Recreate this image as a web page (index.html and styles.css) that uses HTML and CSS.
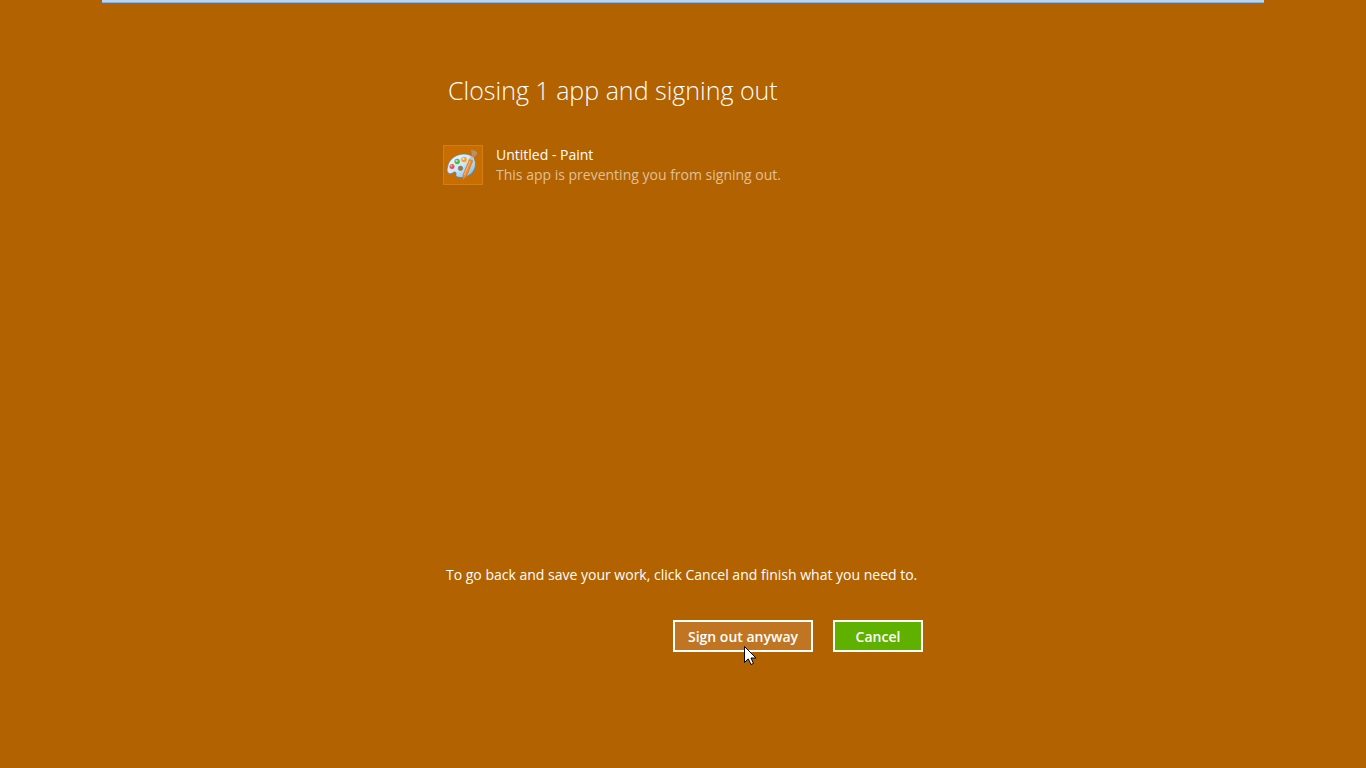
FILE: index.html
```
<!DOCTYPE html>
<html lang="en">
   <head>
      <meta charset="utf-8">
      <title>Closing 1 app and signing out</title>
      <link rel="stylesheet" href="styles.css">
   </head>
   <body>
      <div class="topbar"></div>
      <main class="panel">
         <h1 class="title">Closing 1 app and signing out</h1>
         <ul class="apps">
            <li class="app">
               <span class="tile">
                  <svg width="34" height="34" viewBox="0 0 34 34" aria-hidden="true">
                     <defs>
                        <linearGradient id="palette" x1="0" y1="0" x2="1" y2="1">
                           <stop offset="0" stop-color="#f4fbff"/>
                           <stop offset="0.5" stop-color="#cfe7f5"/>
                           <stop offset="1" stop-color="#72b3de"/>
                        </linearGradient>
                     </defs>
                     <path fill="url(#palette)" stroke="#4f87ab" stroke-width="0.8" fill-rule="evenodd" d="M1.500 19C2.500 12 9 6.500 17 6C24.500 5.600 29.500 9.500 29.500 16C29.500 24 22.500 29.500 15.500 29.500C11.500 29.500 9.500 28.500 10 26.500C10.600 24.500 9 23.200 7.500 24.300C5.500 26 3.500 26.500 1.900 24.500C0.600 22.800 1 21.500 1.500 19ZM14.500 18.100A2.200 2.200 0 1 0 14.500 22.500A2.200 2.200 0 1 0 14.500 18.100Z"/>
                     <circle cx="6" cy="18.500" r="2.500" fill="#df5358"/>
                     <circle cx="5.400" cy="17.800" r="1" fill="#f8b0ae"/>
                     <circle cx="11.200" cy="13.500" r="2.700" fill="#58b747"/>
                     <circle cx="10.600" cy="12.800" r="1.100" fill="#b9ecaa"/>
                     <circle cx="18" cy="11.500" r="2.800" fill="#f3a51f"/>
                     <circle cx="17.400" cy="10.800" r="1.200" fill="#ffe29a"/>
                     <path fill="#f08a2c" stroke="#c8691f" stroke-width="0.500" d="M23.500 11L27 12.500L20.600 28L17 32.500L17 27Z"/>
                     <path stroke="#ffc484" stroke-width="0.800" d="M24.200 13L18.300 27"/>
                     <path fill="#c9c3b4" d="M25.300 7.500L28.300 9L27 12.600L23.500 11Z"/>
                     <path fill="#bd8f62" stroke="#99683c" stroke-width="0.500" d="M25.300 7.800C25.800 5.500 24.500 3.800 24.900 1.800C26 1.200 27.500 2.200 28.500 2.300C29.700 2.500 30.800 4 32 4.800C31.400 7 29.800 7.400 28.300 9.200Z"/>
                  </svg>
               </span>
               <div class="app-text">
                  <div class="app-name">Untitled - Paint</div>
                  <div class="app-status">This app is preventing you from signing out.</div>
               </div>
            </li>
         </ul>
         <p class="hint">To go back and save your work, click Cancel and finish what you need to.</p>
         <div class="buttons">
            <button type="button" class="btn btn-signout">Sign out anyway
               <svg class="pointer" width="13" height="20" viewBox="0 0 13 20" aria-hidden="true">
                  <path fill="#fff" stroke="#000" d="M0.500 0.500V16.500L4.300 12.900L7 18.500L9.500 17.400L7 12H12Z"/>
               </svg>
            </button>
            <button type="button" class="btn btn-cancel">Cancel</button>
         </div>
      </main>
   </body>
</html>
```
FILE: styles.css
```
* { box-sizing: border-box; }

body {
	display: flex;
	flex-direction: column;
	min-height: 100vh;
	margin: 0;
	background: #b26200;
	color: #fff;
	font: 14px/20px "Open Sans", "Noto Sans", sans-serif;
}

.topbar {
	width: 85%;
	height: 3px;
	margin: 0 auto;
	background: #bdd3ec;
	border-bottom: 1px solid #8fb2dd;
}

.panel {
	display: flex;
	flex: 1;
	flex-direction: column;
	width: 100%;
	max-width: 480px;
	margin: 0 auto;
	padding: 67px 0 116px;
}

.title {
	margin: 0 0 35px;
	padding-left: 5px;
	font-size: 25px;
	font-weight: 300;
	line-height: 40px;
}

.apps {
	flex: 1;
	margin: 0;
	padding: 0;
	list-style: none;
}

.app {
	display: flex;
	gap: 13px;
}

.tile {
	display: flex;
	align-items: center;
	justify-content: center;
	width: 40px;
	height: 40px;
	background: #c86e00;
	border: 1px solid #d07d1a;
}

.app-status { color: #e0c099; }

.hint {
	margin: 0 0 35px;
	padding-left: 3px;
}

.buttons {
	display: flex;
	justify-content: flex-end;
	gap: 20px;
}

.btn {
	position: relative;
	min-width: 90px;
	height: 32px;
	padding: 1px 13px 0;
	border: 2px solid #fff;
	color: #fff;
	font: 600 14px/20px "Open Sans", "Noto Sans", sans-serif;
}

.btn-signout { background: #c17522; }
.btn-cancel { background: #60b000; }

/* mouse pointer over the button */
.pointer {
	position: absolute;
	top: 24px;
	left: 69px;
}
```
